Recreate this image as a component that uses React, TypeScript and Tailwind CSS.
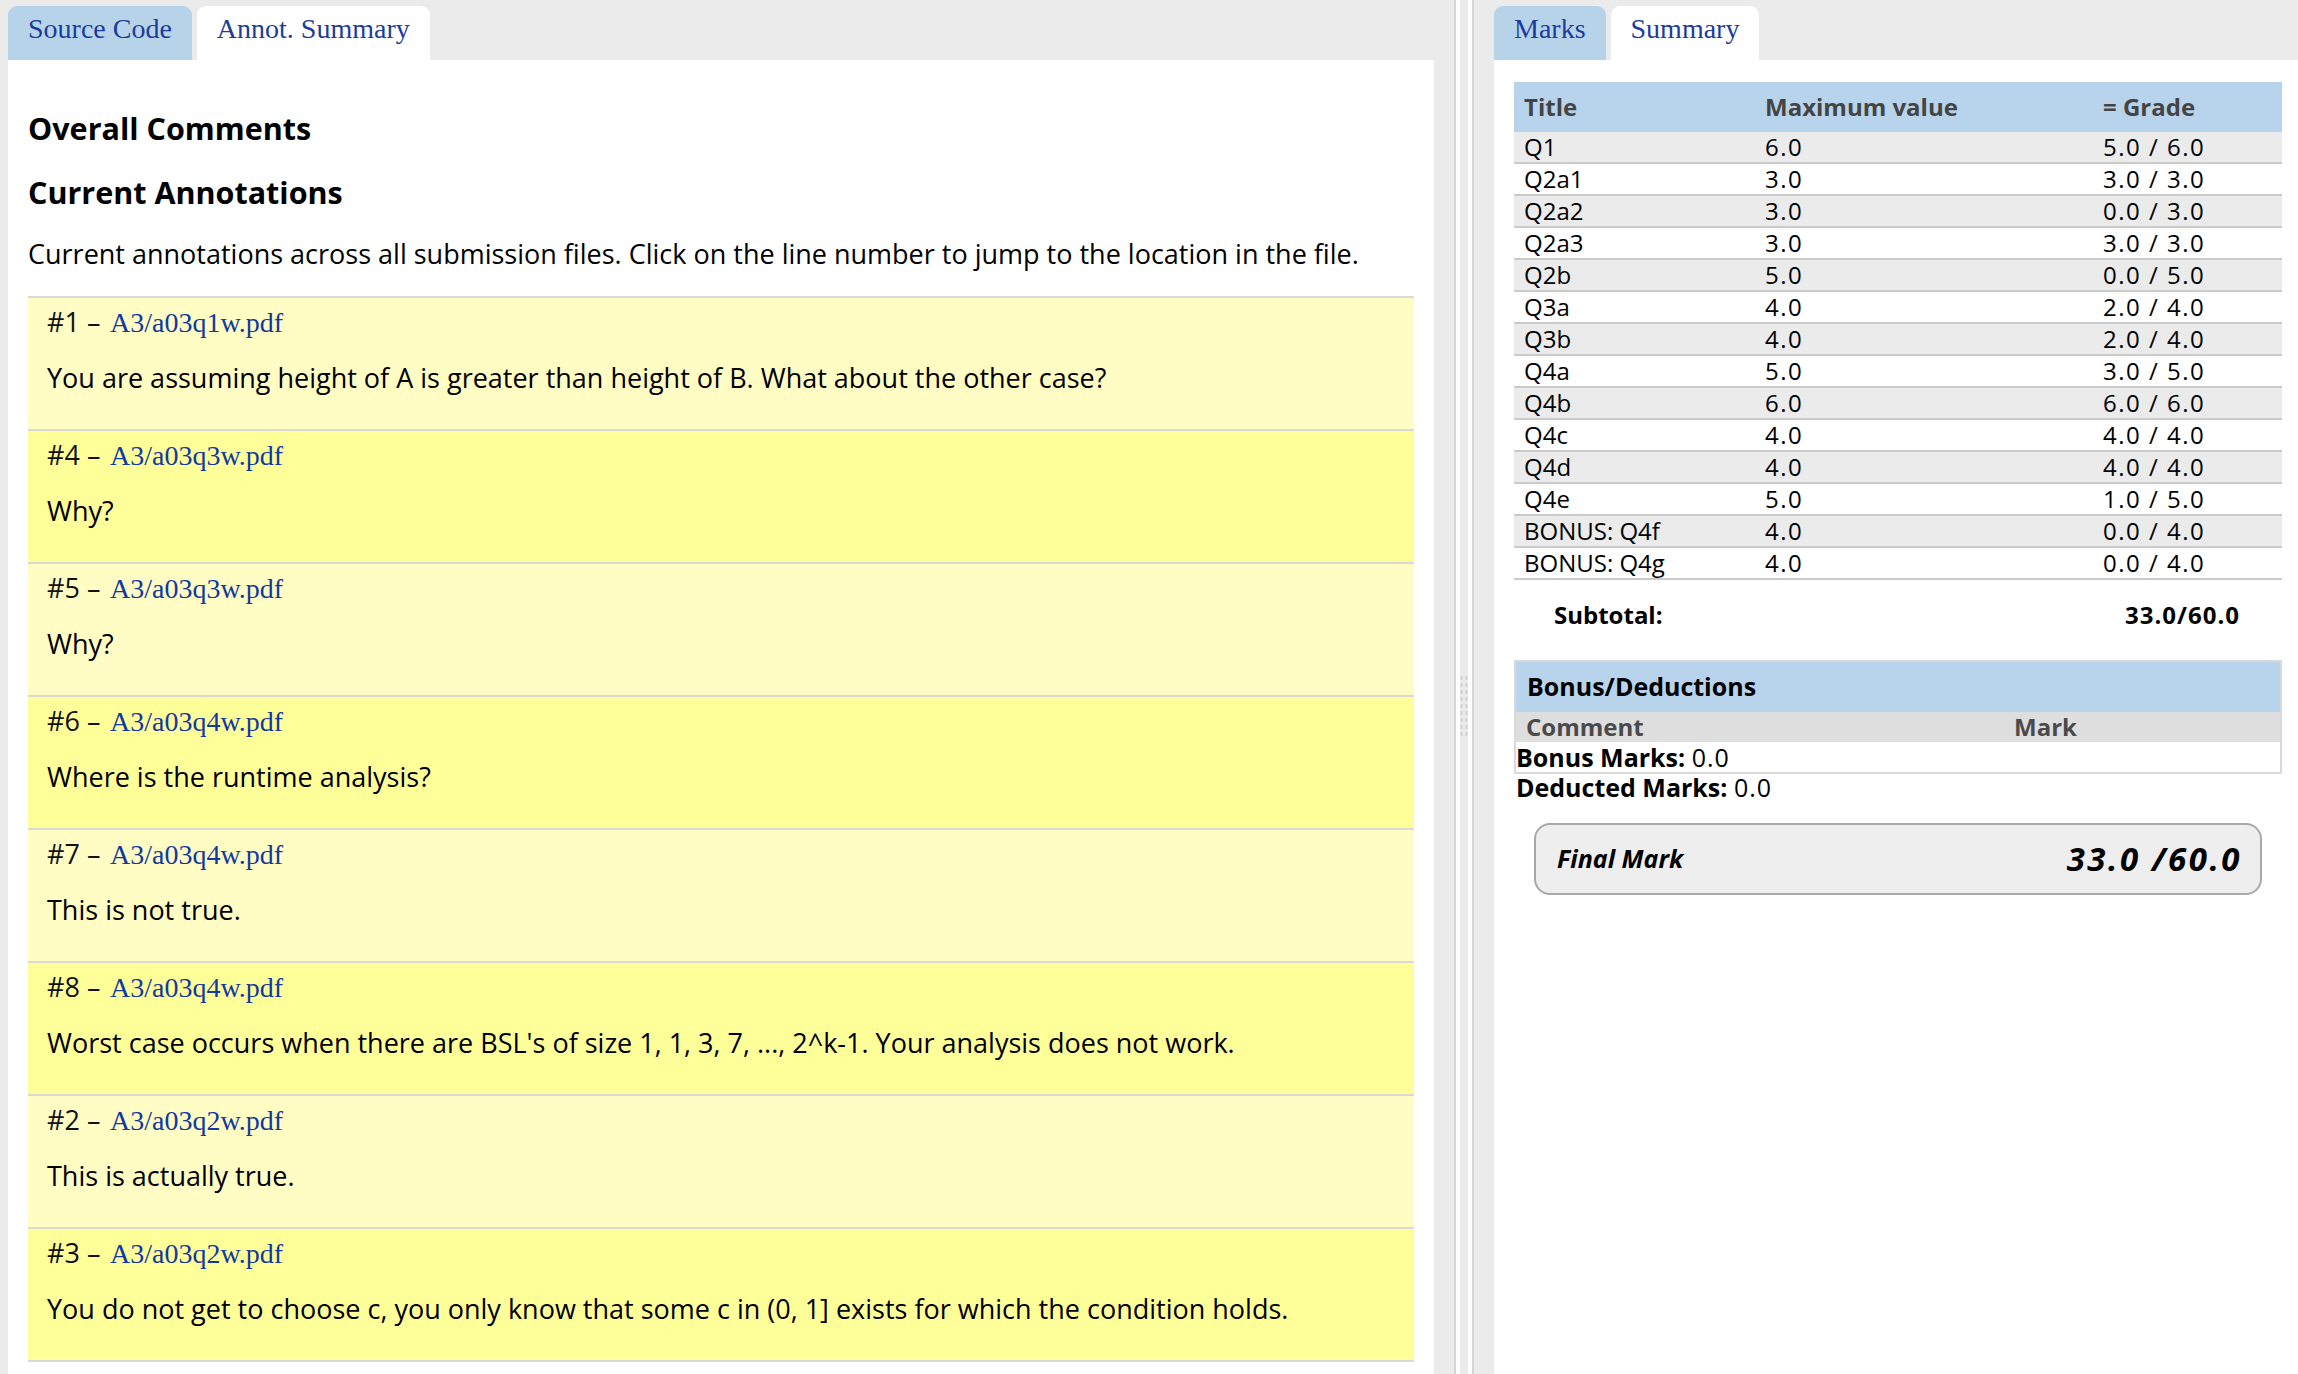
import React from "react";

const annotations = [
  { n: 1, file: "A3/a03q1w.pdf", text: "You are assuming height of A is greater than height of B. What about the other case?" },
  { n: 4, file: "A3/a03q3w.pdf", text: "Why?" },
  { n: 5, file: "A3/a03q3w.pdf", text: "Why?" },
  { n: 6, file: "A3/a03q4w.pdf", text: "Where is the runtime analysis?" },
  { n: 7, file: "A3/a03q4w.pdf", text: "This is not true." },
  { n: 8, file: "A3/a03q4w.pdf", text: "Worst case occurs when there are BSL's of size 1, 1, 3, 7, ..., 2^k-1. Your analysis does not work." },
  { n: 2, file: "A3/a03q2w.pdf", text: "This is actually true." },
  { n: 3, file: "A3/a03q2w.pdf", text: "You do not get to choose c, you only know that some c in (0, 1] exists for which the condition holds." },
];

const marks = [
  ["Q1", "6.0", "5.0 / 6.0"],
  ["Q2a1", "3.0", "3.0 / 3.0"],
  ["Q2a2", "3.0", "0.0 / 3.0"],
  ["Q2a3", "3.0", "3.0 / 3.0"],
  ["Q2b", "5.0", "0.0 / 5.0"],
  ["Q3a", "4.0", "2.0 / 4.0"],
  ["Q3b", "4.0", "2.0 / 4.0"],
  ["Q4a", "5.0", "3.0 / 5.0"],
  ["Q4b", "6.0", "6.0 / 6.0"],
  ["Q4c", "4.0", "4.0 / 4.0"],
  ["Q4d", "4.0", "4.0 / 4.0"],
  ["Q4e", "5.0", "1.0 / 5.0"],
  ["BONUS: Q4f", "4.0", "0.0 / 4.0"],
  ["BONUS: Q4g", "4.0", "0.0 / 4.0"],
];

function Tab({ label, active }: { label: string; active?: boolean }) {
  return (
    <div
      className={
        active
          ? "h-[54px] rounded-t-[9px] bg-white px-[20px] pt-[7px] font-['Liberation_Serif',serif] text-[28px] leading-[31px] text-[#1b3c9a]"
          : "h-[54px] rounded-t-[9px] bg-[#b7d3ea] px-[20px] pt-[7px] font-['Liberation_Serif',serif] text-[28px] leading-[31px] text-[#1b3c9a]"
      }
    >
      {label}
    </div>
  );
}

function Annotation({ n, file, text, odd }: { n: number; file: string; text: string; odd: boolean }) {
  return (
    <div
      className={
        odd
          ? "border-t-2 border-[#d9d9d9] bg-[#fffcc4] pt-[6px] pb-[33px] pl-[19px]"
          : "border-t-2 border-[#d9d9d9] bg-[#ffff99] pt-[6px] pb-[33px] pl-[19px]"
      }
    >
      <div className="h-[36px] text-[27px] leading-[36px] text-[#111]">
        <span className="inline-block w-[63px]">#{n} –</span>
        <a className="font-['Liberation_Serif',serif] text-[28px] text-[#12399f]">{file}</a>
      </div>
      <p className="mt-[20px] text-[27px] leading-[36px]">{text}</p>
    </div>
  );
}

function Splitter() {
  return (
    <div className="flex w-[60px] shrink-0">
      <div className="w-[20px]" />
      <div className="w-[2px] bg-[#d6d6d6]" />
      <div className="w-[4px] bg-white" />
      <div className="w-[8px] pt-[676px]">
        <svg width="8" height="60" viewBox="0 0 8 60">
          <line x1="1.5" y1="0" x2="1.5" y2="60" stroke="#cfcfcf" strokeWidth="2" strokeDasharray="4 3" />
          <line x1="6.5" y1="0" x2="6.5" y2="60" stroke="#cfcfcf" strokeWidth="2" strokeDasharray="4 3" />
        </svg>
      </div>
      <div className="w-[4px] bg-white" />
      <div className="w-[2px] bg-[#d6d6d6]" />
      <div className="w-[20px]" />
    </div>
  );
}

export default function App() {
  return (
    <div className="flex h-[1374px] w-[2298px] overflow-hidden bg-[#ebebeb] font-['Open_Sans',sans-serif] text-black">
      {/* left: annotation summary */}
      <div className="flex w-[1434px] shrink-0 flex-col pl-[8px] pt-[6px]">
        <div className="flex h-[54px] gap-[5px]">
          <Tab label="Source Code" />
          <Tab label="Annot. Summary" active />
        </div>
        <div className="flex-1 bg-white px-[20px] pt-[48px]">
          <h2 className="text-[30.5px] font-bold leading-[40px]">Overall Comments</h2>
          <h2 className="mt-[24px] text-[30.5px] font-bold leading-[40px]">Current Annotations</h2>
          <p className="mt-[24px] text-[27px] leading-[36px]">
            Current annotations across all submission files. Click on the line number to jump to the location in the file.
          </p>
          <div className="mt-[24px] border-b-2 border-[#d9d9d9]">
            {annotations.map((a, i) => (
              <Annotation key={a.n} n={a.n} file={a.file} text={a.text} odd={i % 2 === 0} />
            ))}
          </div>
        </div>
      </div>

      <Splitter />

      {/* right: marks summary */}
      <div className="flex flex-1 flex-col pt-[6px]">
        <div className="flex h-[54px] gap-[5px]">
          <Tab label="Marks" />
          <Tab label="Summary" active />
        </div>
        <div className="flex-1 bg-white pl-[20px] pr-[16px] pt-[22px]">
          <div className="grid h-[50px] grid-cols-[241px_338px_1fr] items-center bg-[#b8d4ec] text-[24px] font-bold text-[#444]">
            <div className="px-[10px]">Title</div>
            <div className="px-[10px]">Maximum value</div>
            <div className="px-[10px]">= Grade</div>
          </div>
          {marks.map((r, i) => (
            <div
              key={r[0]}
              className={
                i % 2 === 0
                  ? "grid h-[32px] grid-cols-[241px_338px_1fr] border-b-2 border-[#cbcbcb] bg-[#ebebeb] text-[24px] leading-[30px]"
                  : "grid h-[32px] grid-cols-[241px_338px_1fr] border-b-2 border-[#cbcbcb] bg-white text-[24px] leading-[30px]"
              }
            >
              <div className="px-[10px]">{r[0]}</div>
              <div className="px-[10px] tracking-[1.5px]">{r[1]}</div>
              <div className="px-[10px] tracking-[1.5px]">{r[2]}</div>
            </div>
          ))}

          <div className="mt-[19px] flex h-[32px] justify-between pl-[40px] pr-[42px] text-[24px] font-bold leading-[32px]">
            <span>Subtotal:</span>
            <span className="tracking-[1px]">33.0/60.0</span>
          </div>

          <div className="mt-[29px] border-2 border-[#d9d9d9]">
            <div className="flex h-[50px] items-center bg-[#b8d4ec] px-[11px] text-[25px] font-bold">Bonus/Deductions</div>
            <div className="grid h-[30px] grid-cols-[498px_1fr] bg-[#dedede] text-[24px] font-bold leading-[30px] text-[#4a4a4a]">
              <div className="px-[10px]">Comment</div>
              <div>Mark</div>
            </div>
            <div className="h-[30px] text-[25px] leading-[30px]">
              <span className="font-bold">Bonus Marks:</span> <span className="tracking-[1px]">0.0</span>
            </div>
          </div>
          <div className="pl-[2px] text-[25px] leading-[26px]">
            <span className="font-bold">Deducted Marks:</span> <span className="tracking-[1px]">0.0</span>
          </div>

          <div className="mx-[20px] mt-[23px] flex h-[72px] items-center justify-between rounded-[16px] border-2 border-[#a9a9a9] bg-[#eeeeee] pl-[21px] pr-[18px]">
            <span className="text-[25px] font-bold italic">Final Mark</span>
            <span className="text-[33px] font-bold italic tracking-[2.5px]">33.0 /60.0</span>
          </div>
        </div>
      </div>
    </div>
  );
}
